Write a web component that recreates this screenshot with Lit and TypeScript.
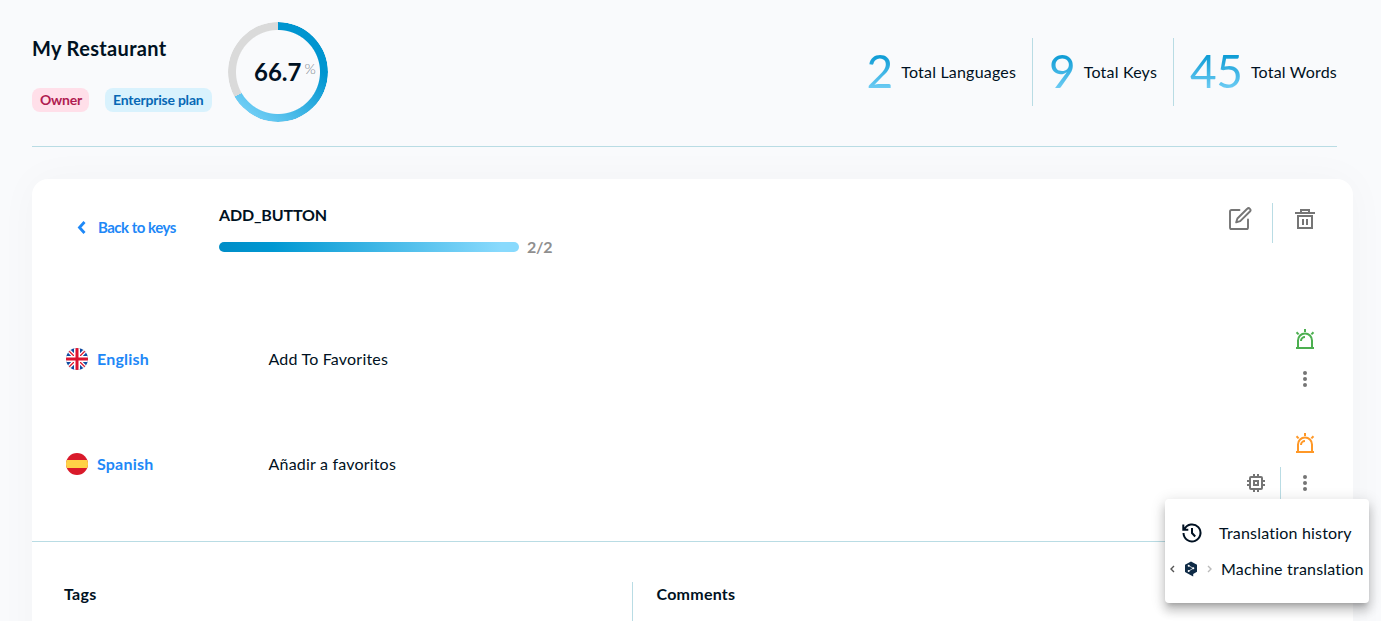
import { LitElement, html, css, svg } from "lit";
import { customElement, property } from "lit/decorators.js";

const editIcon = html`<svg width="24" height="24" viewBox="0 0 24 24" fill="none" stroke="#757575" stroke-width="1.9" stroke-linejoin="round" stroke-linecap="round">
  <path d="M11.500 3H3.600Q2 3 2 4.600V20.400Q2 22 3.600 22H18.400Q20 22 20 20.400V12.500"/>
  <path d="M19.200 1.800a1.900 1.900 0 0 1 2.700 2.700L12.200 14.200L8.200 15.400L9.400 11.500Z"/></svg>`;

const trashIcon = html`<svg width="24" height="24" viewBox="0 0 24 24" fill="none" stroke="#757575" stroke-width="2">
  <path d="M2 6H22M5 9H19V21H5ZM8 6V3H16V6M10 12V18M14 12V18"/></svg>`;

const sirenIcon = html`<svg width="24" height="24" viewBox="0 0 24 24" fill="none" stroke="currentColor" stroke-width="2">
  <path d="M3 21H21M5 21V13.500a7 7 0 0 1 14 0V21M12 2V5M3.500 5.300L5.600 7.400M20.500 5.300L18.400 7.400M8 14a4 4 0 0 1 4-4"/></svg>`;

const dotsIcon = html`<svg width="24" height="24" viewBox="0 0 24 24" fill="#757575">
  <circle cx="12" cy="6" r="2"/><circle cx="12" cy="12" r="2"/><circle cx="12" cy="18" r="2"/></svg>`;

const chipIcon = html`<svg width="24" height="24" viewBox="0 0 24 24" fill="none" stroke="#757575" stroke-width="2">
  <rect x="6" y="6" width="12" height="12" rx="1"/><rect x="10" y="10" width="4" height="4"/>
  <path d="M10 3V6M14 3V6M10 18V21M14 18V21M3 10H6M3 14H6M18 10H21M18 14H21"/></svg>`;

const historyIcon = html`<svg width="24" height="24" viewBox="0 0 24 24" fill="none" stroke="#001122" stroke-width="2">
  <path d="M4.400 8.100A8.500 8.500 0 1 1 3.500 12M12 7V12L15.200 15.500M3.300 3.600V8.700H8.300"/></svg>`;

const chevron = (d: string, c: string) => html`<svg width="6" height="8" viewBox="0 0 6 8" fill="none" stroke=${c} stroke-width="1.400"><path d=${d}/></svg>`;

const engineIcon = html`<svg width="14" height="16" viewBox="0 0 14 16">
  <path fill="#0f2b46" d="M1 3.700L7 .4L13 3.700V10.800L9.200 13V15.600L6.400 14L1 10.900Z"/>
  <path d="M4.700 4.700L9.300 7.300L4.700 10" fill="none" stroke="#fff" stroke-width=".7"/>
  <g fill="#fff"><circle cx="4.700" cy="4.800" r="1"/><circle cx="9.300" cy="7.300" r="1"/><circle cx="4.700" cy="9.900" r="1"/></g></svg>`;

const ukFlag = svg`<rect width="22" height="22" fill="#0f4aa0"/>
  <path d="M0 0L22 22M22 0L0 22" stroke="#fff" stroke-width="4"/>
  <path d="M0 0L22 22M22 0L0 22" stroke="#e0162b" stroke-width="1.300"/>
  <path d="M11 0V22M0 11H22" stroke="#fff" stroke-width="6"/>
  <path d="M11 0V22M0 11H22" stroke="#dc1430" stroke-width="3"/>`;
const esFlag = svg`<rect width="22" height="22" fill="#d91a2a"/><rect y="7" width="22" height="8" fill="#ffd247"/>`;

@customElement("stat-item")
class StatItem extends LitElement {
  @property() value = "";
  @property() label = "";
  static styles = css`
    :host { display: flex; align-items: center; height: 68px; padding-left: 16px; padding-right: 17px; }
    :host(:not(:last-child)) { border-right: 1px solid #b9dce4; padding-right: 16px; }
    .value { font-size: 46px; line-height: 68px; margin-top: -2px; letter-spacing: -.5px; background: linear-gradient(180deg, #0095d0 20%, #89dafd 90%); -webkit-background-clip: text; background-clip: text; color: transparent; }
    .label { margin-left: 8.500px; font-size: 16px; letter-spacing: .2px; }
  `;
  render() {
    return html`<span class="value">${this.value}</span><span class="label">${this.label}</span>`;
  }
}

@customElement("progress-ring")
class ProgressRing extends LitElement {
  @property({ type: Number }) value = 0;
  static styles = css`
    :host { display: grid; width: 100px; height: 100px; letter-spacing: 0; }
    .ring, .text { grid-area: 1 / 1; }
    .ring { border-radius: 50%; -webkit-mask: radial-gradient(circle, transparent 41.500px, #000 42.500px); mask: radial-gradient(circle, transparent 41.500px, #000 42.500px); background: #dadada; display: grid; }
    .arc { border-radius: 50%; background: linear-gradient(220deg, #0095d0 30%, #78d2f8 90%); }
    .text { align-self: center; display: flex; align-items: flex-start; padding-left: 26px; font-size: 24px; font-weight: 700; line-height: 30px; }
    .pct { font-size: 14.500px; font-weight: 300; line-height: 24px; margin-left: 3px; color: #7c858d; }
  `;
  render() {
    const m = `conic-gradient(#000 ${this.value}%, transparent ${this.value}%)`;
    return html`<div class="ring"><div class="arc" style="-webkit-mask:${m};mask:${m}"></div></div>
      <div class="text">${this.value}<span class="pct">%</span></div>`;
  }
}

@customElement("app-root")
class AppRoot extends LitElement {
  static styles = css`
    :host { display: block; position: relative; height: 621px; overflow: hidden; background: #f9fafc; color: #001122; font-family: Lato, sans-serif; font-size: 16px; line-height: 24px; letter-spacing: .2px; }
    * { box-sizing: border-box; }
    svg { display: block; flex: none; }
    .header { height: 147px; margin: 0 44px 32px 32px; border-bottom: 1px solid #b9dce4; display: flex; align-items: flex-start; }
    .project { width: 196px; padding-top: 32px; }
    .name { font-size: 20px; line-height: 32px; font-weight: 700; letter-spacing: .34px; }
    .badges { display: flex; gap: 16px; margin-top: 24px; }
    .badge { height: 24px; padding: 0 8px; border-radius: 8px; font-size: 14px; font-weight: 700; line-height: 24px; white-space: nowrap; letter-spacing: -.22px; }
    .owner { background: #ffdfe9; color: #b01c51; width: 57px; }
    .plan { background: #d9f2fd; color: #0768b5; width: 107px; }
    progress-ring { margin-top: 22px; }
    .stats { display: flex; margin: 38px -17px 0 auto; }
    .card { height: 500px; margin: 0 28px 0 32px; background: #fff; border-radius: 16px; box-shadow: 0 0 40px rgba(0, 17, 34, .03); }
    .keybar { display: flex; height: 107px; padding: 24px 36px 0 45px; }
    .back { display: flex; align-items: center; height: 24px; margin-top: 12px; width: 142px; color: #1e88f7; font-size: 15px; font-weight: 700; gap: 12px; letter-spacing: -.5px; }
    .key { font-weight: 700; letter-spacing: -.15px; }
    .progress { display: flex; align-items: center; gap: 8px; margin-top: 8px; font-weight: 700; color: #8f8f8f; letter-spacing: -.3px; }
    .bar { width: 300px; height: 10px; border-radius: 5px; background: linear-gradient(90deg, #008dc7 0%, #0098d2 18%, #89dafd 94%); }
    .actions { display: flex; align-items: flex-start; margin-left: auto; }
    .actions svg { margin-top: 4px; }
    .sep { width: 1px; height: 40px; background: #b9dce4; margin: 0 20px; }
    .row { display: flex; align-items: center; height: 104px; padding: 0 36px 0 34px; }
    .row.first { margin: 21px 0 1px; }
    .flag { width: 22px; height: 22px; border-radius: 50%; overflow: hidden; }
    .lang { width: 171px; margin-left: 9px; color: #1e88f7; font-weight: 700; }
    .text { flex: 1; padding-left: .5px; }
    .tools { display: grid; grid-template-columns: auto 24px; grid-template-rows: 40px 40px; align-items: center; margin-bottom: 2px; }
    .first .tools { margin-bottom: 0; }
    .siren { grid-column: 2; height: 40px; padding-top: 8px; }
    .green { color: #4caf50; }
    .orange { color: #ff9827; }
    .extra { display: flex; align-items: center; height: 40px; }
    .extra .sep { height: 32px; margin: 0 12px; }
    .more { grid-column: 2; grid-row: 2; }
    .bottom { display: grid; grid-template-columns: 601px 1fr; margin-top: 25px; border-top: 1px solid #b9dce4; padding-top: 40px; font-weight: 700; letter-spacing: .25px; }
    .tags { padding-left: 32px; height: 60px; border-right: 1px solid #b9dce4; }
    .comments { padding-left: 23.500px; }
    .menu { position: absolute; left: 1165px; top: 499px; width: 204px; height: 104px; background: #fff; border-radius: 4px; padding-top: 16px; box-shadow: 0 5px 5px -3px rgba(0,0,0,.2), 0 8px 10px 1px rgba(0,0,0,.14), 0 3px 14px 2px rgba(0,0,0,.12); }
    .item { display: flex; align-items: center; height: 36px; white-space: nowrap; }
    .history { padding-left: 15px; gap: 15px; }
    .machine { padding-left: 4px; }
    .machine .engine { margin: 0 9px 0 9px; }
    .machine .engine-name { margin-left: 8px; }
  `;

  private row(first: boolean, flag: unknown, lang: string, text: string) {
    return html`<div class="row ${first ? "first" : ""}">
      <svg class="flag" viewBox="0 0 22 22">${flag}</svg>
      <span class="lang">${lang}</span><span class="text">${text}</span>
      <div class="tools">
        <div class="siren ${first ? "green" : "orange"}">${sirenIcon}</div>
        ${first ? "" : html`<div class="extra">${chipIcon}<div class="sep"></div></div>`}
        <div class="more">${dotsIcon}</div>
      </div>
    </div>`;
  }

  render() {
    return html`
      <header class="header">
        <div class="project">
          <div class="name">My Restaurant</div>
          <div class="badges"><span class="badge owner">Owner</span><span class="badge plan">Enterprise plan</span></div>
        </div>
        <progress-ring .value=${66.7}></progress-ring>
        <div class="stats">
          <stat-item value="2" label="Total Languages"></stat-item>
          <stat-item value="9" label="Total Keys"></stat-item>
          <stat-item value="45" label="Total Words"></stat-item>
        </div>
      </header>
      <main class="card">
        <div class="keybar">
          <div class="back"><svg width="9" height="14" viewBox="0 0 9 14" fill="none" stroke="currentColor" stroke-width="2.800"><path d="M7.500 2L2.500 7.500L7.500 13"/></svg><span>Back to keys</span></div>
          <div><div class="key">ADD_BUTTON</div><div class="progress"><div class="bar"></div>2/2</div></div>
          <div class="actions">${editIcon}<div class="sep"></div>${trashIcon}</div>
        </div>
        ${this.row(true, ukFlag, "English", "Add To Favorites")}
        ${this.row(false, esFlag, "Spanish", "Añadir a favoritos")}
        <div class="bottom"><div class="tags">Tags</div><div class="comments">Comments</div></div>
      </main>
      <div class="menu">
        <div class="item history">${historyIcon}<span>Translation history</span></div>
        <div class="item machine">${chevron("M5 1L2 4L5 7", "#555")}<span class="engine">${engineIcon}</span>${chevron("M1 1L4 4L1 7", "#bbb")}<span class="engine-name">Machine translation</span></div>
      </div>`;
  }
}
